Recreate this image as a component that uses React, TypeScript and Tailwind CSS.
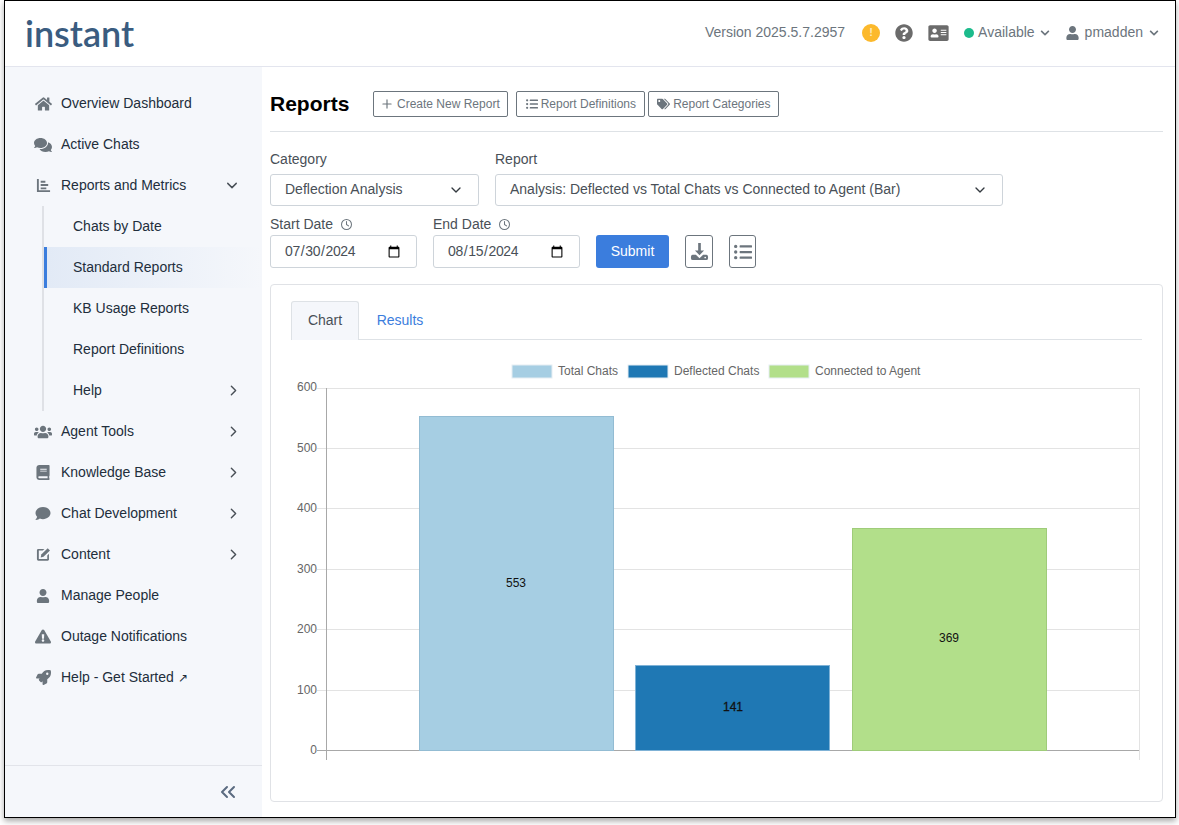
import { ReactNode } from 'react';
import {
  FaAddressCard,
  FaBook,
  FaChevronDown,
  FaComment,
  FaComments,
  FaExclamationTriangle,
  FaHome,
  FaListUl,
  FaQuestionCircle,
  FaRocket,
  FaTags,
  FaUser,
  FaUsers,
} from 'react-icons/fa';
import { FaRegClock } from 'react-icons/fa6';
import { ChevronDown, ChevronRight, ChevronsLeft, Plus } from 'lucide-react';

const gridLines = [
  { y: 388, label: '600', labelY: 391 },
  { y: 448, label: '500', labelY: 452 },
  { y: 508, label: '400', labelY: 512 },
  { y: 569, label: '300', labelY: 573 },
  { y: 629, label: '200', labelY: 633 },
  { y: 690, label: '100', labelY: 694 },
  { y: 750, label: '0', labelY: 754 },
];

const bars = [
  { x: 419, top: 416, value: 553, fill: '#a6cee3', stroke: '#93bcd3', labelX: 516, labelY: 587, weight: 0 },
  { x: 635, top: 665, value: 141, fill: '#1f78b4', stroke: '#7fb2d6', labelX: 733, labelY: 711, weight: 0.3 },
  { x: 852, top: 528, value: 369, fill: '#b2df8a', stroke: '#9fcc7a', labelX: 949, labelY: 642, weight: 0 },
];

const legend = [
  { x: 512, label: 'Total Chats', fill: '#a6cee3' },
  { x: 628, label: 'Deflected Chats', fill: '#1f78b4' },
  { x: 769, label: 'Connected to Agent', fill: '#b2df8a' },
];

function ReportsIcon() {
  return (
    <svg viewBox="0 0 16 16" className="h-[15px] w-[15px]" fill="currentColor">
      <path d="M1 1h2v12h12v2H1z" />
      <path d="M5 3h5v2H5zM5 6.5h8v2H5zM5 10h6v2H5z" />
    </svg>
  );
}

function EditIcon() {
  return (
    <svg viewBox="0 0 16 16" className="h-[15px] w-[15px]" fill="currentColor">
      <path d="M2.500 2H9L7.200 3.800H3v9h9V9l1.800-1.800v5.300A1.500 1.500 0 0 1 12.300 14.600H2.500A1.500 1.500 0 0 1 1 13.100V3.500A1.500 1.500 0 0 1 2.500 2z" />
      <path d="M12.500 1.200l2.400 2.400-6.900 6.900-3 .6.600-3z" />
    </svg>
  );
}

function DownloadIcon() {
  return (
    <svg viewBox="0 0 20 20" className="h-[19px] w-[19px]" fill="currentColor">
      <path d="M8.600 1h2.800v8h3.400L10 14 5.200 9h3.400z" />
      <path d="M3 13.500h3.200L10 17l3.800-3.500H17a2 2 0 0 1 2 2V17a2 2 0 0 1-2 2H3a2 2 0 0 1-2-2v-1.500a2 2 0 0 1 2-2z" />
      <circle cx="16" cy="16.300" r="0.900" fill="#ffffff" />
    </svg>
  );
}

function NavRow({ icon, label, arrow }: { icon: ReactNode; label: ReactNode; arrow?: boolean }) {
  return (
    <div className="flex h-[41px] items-center pl-[29px] pr-[20px] text-[#222e3c]">
      <span className="flex w-[18px] justify-center text-[#6c757d]">{icon}</span>
      <span className="ml-[9px] flex-1">{label}</span>
      {arrow && <ChevronRight className="h-[17px] w-[17px] text-[#495057]" />}
    </div>
  );
}

function SubRow({ label, active, arrow }: { label: string; active?: boolean; arrow?: boolean }) {
  return (
    <div
      className={
        active
          ? 'flex h-[41px] items-center border-l-[3px] border-[#3b7ddd] bg-gradient-to-r from-[#e2eaf6] to-[#f5f7fb] pl-[26px] pr-[20px] text-[#222e3c]'
          : 'flex h-[41px] items-center pl-[29px] pr-[20px] text-[#222e3c]'
      }
    >
      <span className="flex-1">{label}</span>
      {arrow && <ChevronRight className="h-[17px] w-[17px] text-[#495057]" />}
    </div>
  );
}

function Sidebar() {
  return (
    <aside className="flex w-[257px] shrink-0 flex-col bg-[#f5f7fb]">
      <nav className="flex-1 pt-[16px]">
        <NavRow icon={<FaHome className="h-[16px] w-[17px]" />} label="Overview Dashboard" />
        <NavRow icon={<FaComments className="h-[16px] w-[18px]" />} label="Active Chats" />
        <div className="flex h-[41px] items-center pl-[29px] pr-[21px] text-[#222e3c]">
          <span className="flex w-[18px] justify-center text-[#6c757d]">
            <ReportsIcon />
          </span>
          <span className="ml-[9px] flex-1">Reports and Metrics</span>
          <ChevronDown className="h-[17px] w-[18px] text-[#495057]" />
        </div>
        <div className="ml-[37px] border-l-2 border-[#dfe1e6] pl-0">
          <SubRow label="Chats by Date" />
          <SubRow label="Standard Reports" active />
          <SubRow label="KB Usage Reports" />
          <SubRow label="Report Definitions" />
          <SubRow label="Help" arrow />
        </div>
        <NavRow icon={<FaUsers className="h-[16px] w-[18px]" />} label="Agent Tools" arrow />
        <NavRow icon={<FaBook className="h-[15px] w-[14px]" />} label="Knowledge Base" arrow />
        <NavRow icon={<FaComment className="h-[15px] w-[16px]" />} label="Chat Development" arrow />
        <NavRow icon={<EditIcon />} label="Content" arrow />
        <NavRow icon={<FaUser className="h-[14px] w-[14px]" />} label="Manage People" />
        <NavRow icon={<FaExclamationTriangle className="h-[15px] w-[16px]" />} label="Outage Notifications" />
        <NavRow
          icon={<FaRocket className="h-[15px] w-[15px]" />}
          label={
            <span>
              Help - Get Started <span className="text-[12px]">↗</span>
            </span>
          }
        />
      </nav>
      <div className="flex h-[52px] items-center justify-end border-t border-[#e2e4ea] pr-[22px]">
        <ChevronsLeft className="h-[24px] w-[24px] text-[#5b6b80]" strokeWidth={2} />
      </div>
    </aside>
  );
}

function Header() {
  return (
    <header className="flex h-[66px] shrink-0 items-center border-b border-[#e3e5ee] bg-white pb-[2px] pl-[20px] pr-[16px] text-[#6c757d] shadow-[0_1px_2px_rgba(0,0,0,0.05)]">
      <div className="font-['Lato',sans-serif] text-[36px] font-semibold leading-none text-[#3a5c80]">instant</div>
      <div className="ml-auto flex items-center">
        <span>Version 2025.5.7.2957</span>
        <span className="ml-[17px] flex h-[18px] w-[18px] items-center justify-center rounded-full bg-[#fcb92c] text-[11px] font-bold leading-none text-[#ffe9b8]">!</span>
        <FaQuestionCircle className="ml-[15px] h-[18px] w-[18px] text-[#6b6b6b]" />
        <FaAddressCard className="ml-[15px] h-[18px] w-[21px] text-[#6b6b6b]" />
        <span className="ml-[15px] h-[10px] w-[10px] rounded-full bg-[#1cbb8c]" />
        <span className="ml-[4px]">Available</span>
        <FaChevronDown className="ml-[5px] h-[10px] w-[10px]" />
        <FaUser className="ml-[16px] h-[14px] w-[13px]" />
        <span className="ml-[6px]">pmadden</span>
        <FaChevronDown className="ml-[6px] h-[10px] w-[10px]" />
      </div>
    </header>
  );
}

function OutlineButton({ icon, label, className }: { icon: ReactNode; label: string; className: string }) {
  return (
    <button className={`flex h-[26px] items-center justify-center gap-[3px] rounded-[2px] border border-[#6c757d] bg-white text-[12px] text-[#6c757d] ${className}`}>
      {icon}
      {label}
    </button>
  );
}

function SelectBox({ value, className }: { value: string; className: string }) {
  return (
    <div className={`flex h-[32px] items-center justify-between rounded-[3px] border border-[#ced4da] bg-white pb-[1px] pl-[14px] pr-[14px] text-[#495057] ${className}`}>
      <span>{value}</span>
      <ChevronDown className="h-[16px] w-[16px] text-[#343a40]" />
    </div>
  );
}

function DateField({ label, value }: { label: string; value: string }) {
  return (
    <div className="flex w-[147px] flex-col">
      <div className="flex h-[20px] items-center pt-[1px] text-[#495057]">
        {label}
        <FaRegClock className="ml-[8px] h-[11px] w-[11px] text-[#6c757d]" />
      </div>
      <input
        type="date"
        defaultValue={value}
        className="mt-[1px] h-[33px] rounded-[3px] border border-[#ced4da] bg-white pl-[13px] pr-[13px] text-[14px] tracking-[-0.4px] text-[#495057]"
      />
    </div>
  );
}

function Chart() {
  return (
    <svg viewBox="291 345 851 440" className="mt-[5px] h-[440px] w-[851px]" fontFamily="'Liberation Sans', Arial, sans-serif">
      {legend.map((item) => (
        <g key={item.label}>
          <rect x={item.x} y={365} width={40} height={13} fill={item.fill} stroke="#e6eef3" strokeWidth={1} />
          <text x={item.x + 46} y={375} fontSize={12} fill="#666666">
            {item.label}
          </text>
        </g>
      ))}
      {gridLines.map((line) => (
        <g key={line.label}>
          <line x1={317} x2={1139} y1={line.y + 0.5} y2={line.y + 0.5} stroke={line.y === 750 ? '#a8a8a8' : '#e3e3e3'} />
          <text x={317} y={line.labelY} fontSize={12} fill="#666666" textAnchor="end">
            {line.label}
          </text>
        </g>
      ))}
      <line x1={326.5} x2={326.5} y1={388} y2={760} stroke="#a8a8a8" />
      <line x1={1139.5} x2={1139.5} y1={388} y2={760} stroke="#e3e3e3" />
      {bars.map((bar) => (
        <g key={bar.value}>
          <rect x={bar.x + 0.5} y={bar.top + 0.5} width={194} height={750 - bar.top} fill={bar.fill} stroke={bar.stroke} />
          <text x={bar.labelX} y={bar.labelY} fontSize={12} fill="#111111" textAnchor="middle" stroke="#111111" strokeWidth={bar.weight}>
            {bar.value}
          </text>
        </g>
      ))}
    </svg>
  );
}

export default function App() {
  return (
    <div className="h-[825px] w-[1179px] bg-white pl-[4px] font-['Liberation_Sans',Arial,sans-serif] text-[14px]">
      <div className="flex h-[818px] w-[1172px] flex-col overflow-hidden border border-black bg-white shadow-[0_3px_6px_rgba(0,0,0,0.35)]">
        <Header />
        <div className="flex flex-1">
          <Sidebar />
          <main className="flex-1 bg-white pl-[8px] pr-[12px]">
            <div className="flex h-[65px] items-center border-b border-[#dee2e6] pt-[9px]">
              <h1 className="mr-[24px] text-[21px] font-bold text-black">Reports</h1>
              <OutlineButton className="w-[135px] pr-[2px]" icon={<Plus className="h-[14px] w-[14px]" strokeWidth={2} />} label="Create New Report" />
              <OutlineButton className="ml-[8px] w-[129px]" icon={<FaListUl className="h-[12px] w-[12px]" />} label="Report Definitions" />
              <OutlineButton className="ml-[3px] w-[131px]" icon={<FaTags className="h-[12px] w-[13px]" />} label="Report Categories" />
            </div>
            <div className="mt-[17px] flex gap-[16px] text-[#495057]">
              <div className="flex flex-col">
                <label className="mb-[5px] h-[20px] leading-[20px]">Category</label>
                <SelectBox className="w-[209px]" value="Deflection Analysis" />
              </div>
              <div className="flex flex-col">
                <label className="mb-[5px] h-[20px] leading-[20px]">Report</label>
                <SelectBox className="w-[508px]" value="Analysis: Deflected vs Total Chats vs Connected to Agent (Bar)" />
              </div>
            </div>
            <div className="mt-[8px] flex items-end">
              <DateField label="Start Date" value="2024-07-30" />
              <div className="ml-[16px]">
                <DateField label="End Date" value="2024-08-15" />
              </div>
              <button className="ml-[16px] h-[33px] w-[73px] rounded-[3px] bg-[#3b7ddd] text-white">Submit</button>
              <button className="ml-[16px] flex h-[33px] w-[28px] items-center justify-center rounded-[3px] border border-[#6c757d] text-[#6c757d]">
                <DownloadIcon />
              </button>
              <button className="ml-[16px] flex h-[33px] w-[27px] items-center justify-center rounded-[3px] border border-[#6c757d] text-[#6c757d]">
                <FaListUl className="h-[18px] w-[18px]" />
              </button>
            </div>
            <section className="mt-[16px] h-[518px] rounded-[4px] border border-[#e0e2e6] px-[20px] pt-[16px]">
              <div className="flex h-[39px] border-b border-[#dee2e6]">
                <div className="mb-[-1px] flex w-[68px] items-center justify-center rounded-t-[3px] border border-b-0 border-[#dee2e6] bg-[#f5f7fb] pb-[1px] text-[#495057]">Chart</div>
                <div className="flex w-[82px] items-center justify-center pt-[1px] text-[#3b7ddd]">Results</div>
              </div>
              <Chart />
            </section>
          </main>
        </div>
      </div>
    </div>
  );
}
